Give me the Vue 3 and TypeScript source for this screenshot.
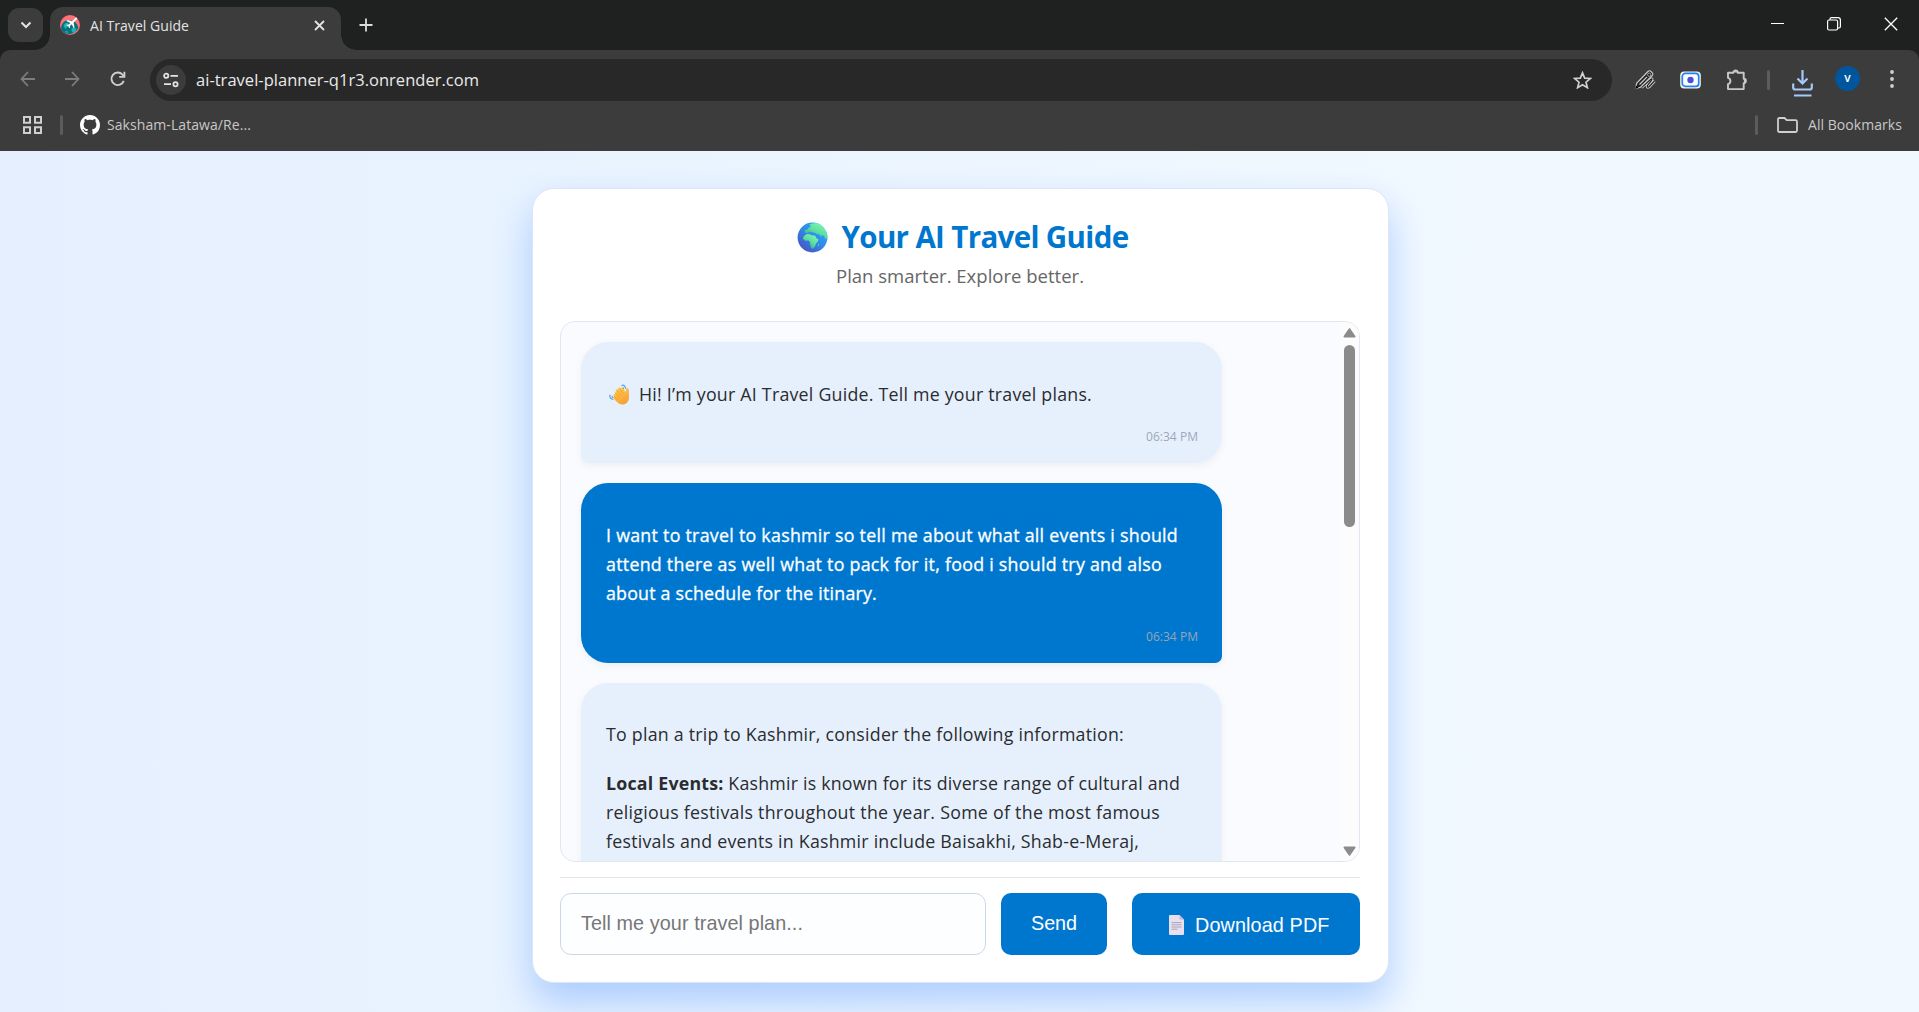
<script setup lang="ts">
import type { Directive } from 'vue'

interface Line {
  text: string
  width: number
  strong?: string
}

interface Message {
  from: 'bot' | 'user'
  time?: string
  wave?: boolean
  paragraphs: Line[][]
}

// Tracks a text run so that it spans the given number of pixels.
const vFit: Directive<HTMLElement, number> = {
  mounted(el, binding) {
    const natural = el.getBoundingClientRect().width
    const count = (el.textContent ?? '').length
    el.style.letterSpacing = `${(binding.value - natural) / count}px`
  },
}

const messages: Message[] = [
  {
    from: 'bot',
    time: '06:34 PM',
    wave: true,
    paragraphs: [[{ text: 'Hi! I’m your AI Travel Guide. Tell me your travel plans.', width: 453 }]],
  },
  {
    from: 'user',
    time: '06:34 PM',
    paragraphs: [
      [
        { text: 'I want to travel to kashmir so tell me about what all events i should', width: 572 },
        { text: 'attend there as well what to pack for it, food i should try and also', width: 556 },
        { text: 'about a schedule for the itinary.', width: 271 },
      ],
    ],
  },
  {
    from: 'bot',
    paragraphs: [
      [{ text: 'To plan a trip to Kashmir, consider the following information:', width: 518 }],
      [
        { strong: 'Local Events:', text: ' Kashmir is known for its diverse range of cultural and', width: 574 },
        { text: 'religious festivals throughout the year. Some of the most famous', width: 554 },
        { text: 'festivals and events in Kashmir include Baisakhi, Shab-e-Meraj,', width: 533 },
      ],
    ],
  },
]
</script>

<template>
  <div class="window">
    <header class="browser">
      <div class="tabstrip">
        <div class="tab-search">
          <svg width="12" height="8" viewBox="0 0 12 8"><path d="M1.5 1.5 6 6l4.500-4.500" fill="none" stroke="#e3e3e3" stroke-width="2" /></svg>
        </div>
        <div class="tab">
          <svg class="favicon" width="20" height="20" viewBox="0 0 20 20">
            <circle cx="10" cy="10" r="10" fill="#fb7277" />
            <path d="M1.200 15C.5 9 4 5.200 9 5.200c5 0 8.500 3 9.300 7.800A10 10 0 0 1 1.200 15Z" fill="#0b6e7f" />
            <path d="M3.500 10.500c1-2 2.500-3 4-3l1 1.500 1.500 1-1.500 1.500-1.500.5-1 2-1.500-1.500Zm8 3 2.500-1.500 2.500 2-1 3-2.500 1-1.500-2.500Zm-6.500 3 2-1 1.500 2.500H7Z" fill="#18b8b0" />
            <path d="m15.300 3-3.300 3.200L7.500 5l-1 .9 3.800 2-1.800 1.800-1.500-.2-.7.700 2 1 1 2 .7-.7-.1-1.500 1.900-1.800 1.800 3.700.9-1-.9-4.500 3.300-3.200c.8-1-.6-2.200-1.600-1.200Z" fill="#fff" />
          </svg>
          <span class="tab-title" v-fit="99">AI Travel Guide</span>
          <svg class="tab-close" width="11" height="11" viewBox="0 0 11 11"><path d="m1 1 9 9m0-9-9 9" stroke="#e3e3e3" stroke-width="1.800" /></svg>
        </div>
        <svg class="new-tab" width="14" height="14" viewBox="0 0 14 14"><path d="M7 .5v13M.5 7h13" stroke="#dcdcdc" stroke-width="1.800" /></svg>
        <div class="window-controls">
          <svg width="13" height="14" viewBox="0 0 13 14"><path d="M0 6.500h13" stroke="#fff" stroke-width="1" /></svg>
          <svg width="14" height="14" viewBox="0 0 14 14" fill="none" stroke="#fff" stroke-width="1.200"><rect x=".6" y="3" width="10" height="10" rx="1.500" /><path d="M3 3V2Q3 .6 4.500.6H11q2.400 0 2.400 2.400v6.500q0 1.500-1.500 1.500h-1" /></svg>
          <svg width="14" height="14" viewBox="0 0 14 14"><path d="m.8.8 12.400 12.400m0-12.400L.8 13.200" stroke="#fff" stroke-width="1.300" /></svg>
        </div>
      </div>

      <div class="toolbar">
        <svg class="nav back" width="16" height="16" viewBox="0 0 16 16"><path d="M8 1 1.500 8 8 15M1.500 8H15" fill="none" stroke="#7d7d7d" stroke-width="1.800" /></svg>
        <svg class="nav forward" width="16" height="16" viewBox="0 0 16 16"><path d="m8 1 6.500 7L8 15m6.500-7H1" fill="none" stroke="#7d7d7d" stroke-width="1.800" /></svg>
        <svg class="nav reload" width="16" height="16" viewBox="0 0 17 17" fill="none" stroke="#cfcfcf" stroke-width="2"><path d="M14.600 10.500a6.700 6.700 0 1 1-1.300-6.700l1.700 1.900" /><path d="M15.300.8v5.400H9.800" /></svg>
        <div class="omnibox">
          <div class="site-info">
            <svg width="16" height="16" viewBox="0 0 16 16" fill="none" stroke="#e3e3e3" stroke-width="1.800"><circle cx="3.200" cy="3.800" r="2.100" /><path d="M7.500 3.800H15M1 12.200h7" /><circle cx="12.500" cy="12.200" r="2.100" /></svg>
          </div>
          <span class="url" v-fit="283">ai-travel-planner-q1r3.onrender.com</span>
          <svg class="star" width="19" height="18" viewBox="0 0 19 18"><path d="m9.500 1.800 2.200 5.300 5.700.4-4.400 3.700 1.400 5.500-4.900-3-4.900 3L6 11.200 1.600 7.500l5.700-.4z" fill="none" stroke="#cfcfcf" stroke-width="1.700" /></svg>
        </div>
        <svg class="ext-pen" width="22" height="22" viewBox="0 0 22 22">
          <path d="m7.500 18.500 9-8q2.400-1.500 1 .8l-4 5.200q-.8 2.500 1.600 1.200l5.400-5.700" fill="none" stroke="#d0d0d0" stroke-width="3" />
          <path d="m7.500 18.500 9-8q2.400-1.500 1 .8l-4 5.200q-.8 2.500 1.600 1.200l5.400-5.700" fill="none" stroke="#222" stroke-width="1.200" />
          <path d="m1.500 19.500 1.300-5.500L14 2.500q1.500-1.500 3 0l1.300 1.300q1.300 1.300 0 2.700L6.500 18.200Z" fill="#222" stroke="#d0d0d0" stroke-width="1.100" />
          <path d="m5.500 15.500 7.500-7.700" stroke="#cfcfcf" stroke-width="1.200" />
          <path d="m1 20 1-3.500 2.500 2.200Z" fill="#000" /><circle cx="15.200" cy="5.700" r="1.600" fill="#111" stroke="#ccc" stroke-width=".8" />
        </svg>
        <svg class="ext-cam" width="21" height="18" viewBox="0 0 21 18"><rect x=".2" y=".4" width="20.600" height="17" rx="4" fill="#fff3e4" /><rect x="2.300" y="2.400" width="16.400" height="13" rx="3" fill="#fff" stroke="#1a84ff" stroke-width="1.700" /><circle cx="10.500" cy="9" r="3.200" fill="#4950d4" /></svg>
        <svg class="ext-puzzle" width="22" height="22" viewBox="0 0 22 22"><path d="M2 3.700h5.300a2.200 2.200 0 0 1 4.400 0h6v6a2.200 2.200 0 0 1 0 4.400v6H2v-5a3.200 3.200 0 0 0 0-6.200Z" fill="none" stroke="#c8c8c8" stroke-width="1.900" stroke-linejoin="round" /><path d="M7.500 3.500a2.100 2.100 0 0 1 4 0zm10.400 6.400a2.100 2.100 0 0 1 0 4z" fill="#c8c8c8" /></svg>
        <i class="bar"></i>
        <svg class="download" width="21" height="27" viewBox="0 0 21 27" fill="none" stroke="#a8c7fa" stroke-width="2.200"><path d="M10.500 0v13M5.500 8.500l5 5 5-5M1.200 13.500v4q0 2 2 2h14.600q2 0 2-2v-4M2 25.500h17.500" /></svg>
        <span class="avatar">v</span>
        <svg class="menu" width="4" height="18" viewBox="0 0 4 18" fill="#cfcfcf"><circle cx="2" cy="2" r="1.900" /><circle cx="2" cy="9" r="1.900" /><circle cx="2" cy="16" r="1.900" /></svg>
      </div>

      <div class="bookmarks">
        <svg width="19" height="18" viewBox="0 0 19 18" fill="none" stroke="#cfcfcf" stroke-width="2"><path d="M1 1h6v5.700H1zM12 1h6v5.700h-6zM1 11.300h6V17H1zM12 11.300h6V17h-6z" /></svg>
        <i class="bar left"></i>
        <svg class="github" width="20" height="20" viewBox="0 0 16 16" fill="#fff"><path d="M8 0C3.580 0 0 3.580 0 8c0 3.540 2.290 6.530 5.470 7.590.4.070.55-.17.55-.38 0-.19-.01-.82-.01-1.490-2.010.37-2.530-.49-2.690-.94-.09-.23-.48-.94-.82-1.130-.28-.15-.68-.52-.01-.53.63-.01 1.080.58 1.230.82.72 1.210 1.870.87 2.330.66.070-.52.28-.87.51-1.070-1.780-.2-3.640-.89-3.640-3.950 0-.87.31-1.590.82-2.150-.08-.2-.36-1.020.08-2.120 0 0 .67-.21 2.200.82.64-.18 1.320-.27 2-.27s1.360.09 2 .27c1.530-1.040 2.200-.82 2.200-.82.44 1.100.16 1.920.08 2.120.51.56.82 1.270.82 2.150 0 3.070-1.870 3.750-3.650 3.950.29.25.54.73.54 1.480 0 1.070-.01 1.930-.01 2.200 0 .21.15.46.55.38A8.010 8.010 0 0 0 16 8c0-4.420-3.580-8-8-8Z" /></svg>
        <span class="bookmark" v-fit="144">Saksham-Latawa/Re...</span>
        <i class="bar right"></i>
        <svg class="folder" width="21" height="16" viewBox="0 0 21 16"><path d="M1 2.500Q1 1 2.500 1h5l2.200 2.200h8.800q1.500 0 1.500 1.500v8.800q0 1.500-1.500 1.500h-16Q1 15 1 13.500Z" fill="none" stroke="#cfcfcf" stroke-width="1.800" /></svg>
        <span class="bookmark" v-fit="94">All Bookmarks</span>
      </div>
    </header>

    <main class="page">
      <section class="card">
        <h1 class="title">
          <svg width="31" height="31" viewBox="0 0 31 31">
            <defs>
              <linearGradient id="sea" x1=".9" y1=".1" x2=".2" y2=".9"><stop offset="0" stop-color="#27b0f8" /><stop offset=".5" stop-color="#2f8bea" /><stop offset="1" stop-color="#4558c8" /></linearGradient>
              <linearGradient id="land" x1=".9" y1="0" x2=".2" y2="1"><stop offset="0" stop-color="#7dffb8" /><stop offset=".5" stop-color="#5fdfa0" /><stop offset="1" stop-color="#3c9c85" /></linearGradient>
              <clipPath id="disc"><circle cx="15.500" cy="15.500" r="14.900" /></clipPath>
            </defs>
            <circle cx="15.500" cy="15.500" r="14.900" fill="url(#sea)" />
            <g clip-path="url(#disc)" fill="url(#land)">
              <path d="M12.500 2.500 15 1.500 20 1l6 3 5 6v8l-1.500-1.500L28 17l-.8-3-2.200-1-1 2-1.500-2.500-3-.5-1.500-1.300-1.500.3-1-1.200-1.500.8-1.300-1-1.700 1.400-1.800-.3-1.700-.2.500-2.500 2.500-.5 1.500-2 2-1Z" />
              <path d="M7.500 13.500 10 12l3 .3 1.500 1 3.500.2 1.700 3 1.800.8-.5 2-2 2.200-1 3-2 2.300-1.800-.5-1-3.500-.2-2.800-1.500-1.500-3 .2L6 17l.3-2Z" />
              <path d="m20.700 23 1.200-1.500-.3 2.800-.9.300Z" />
            </g>
          </svg>
          <span v-fit="287">Your AI Travel Guide</span>
        </h1>
        <p class="subtitle"><span v-fit="248">Plan smarter. Explore better.</span></p>

        <div class="chat">
          <div class="messages">
            <article v-for="(message, m) in messages" :key="m" class="bubble" :class="message.from">
              <p v-for="(paragraph, p) in message.paragraphs" :key="p">
                <span v-for="line in paragraph" :key="line.text" class="line">
                  <svg v-if="message.wave" class="wave" width="20" height="21" viewBox="0 0 20 21">
                    <defs><linearGradient id="hand" x1="0" y1="0" x2=".5" y2="1"><stop offset="0" stop-color="#ffd04a" /><stop offset="1" stop-color="#f7a13a" /></linearGradient></defs>
                    <path d="M6.200 9.800q-.8-1.500.5-2.100L6.900 6.200q.5-1.500 1.900-.8l.5-1.500q1.200-1 2.200 0l1.300-.3q1 .1 1.500 1l2.300 4 .5-3.300q.3-1.200 1.500-1 1.200.3 1.200 1.700l.2 7.500q-.3 5.200-4.500 6.700-4 1.200-7.500-2.200l-3.300-3.300q-1-1.300.3-2.200L4.500 11.500q0-1.700 1.700-1.700Z" fill="url(#hand)" />
                    <path d="m8.500 6.500 3.200 5M11 4.800l3 5M6.800 9.200l3.500 4.300M5.500 12.500l3 3" stroke="#e8982c" stroke-width=".7" fill="none" />
                    <path d="M12.500 1.700q1.500-1.300 2.900.1t1.300 3M14 3.500l1 1.300M1.200 10.800q-.9 1.900.3 3.200t2.700 1.300M3 11.800q0 1.500 1.200 2" fill="none" stroke="#5aa5d8" stroke-width="1.200" />
                  </svg>
                  <span v-fit="line.width"><strong v-if="line.strong">{{ line.strong }}</strong>{{ line.text }}</span>
                </span>
              </p>
              <time v-if="message.time"><span v-fit="52">{{ message.time }}</span></time>
            </article>
          </div>
          <div class="scrollbar">
            <svg width="13" height="10" viewBox="0 0 13 10"><path d="M6.500 1.200 11.500 8.500h-10Z" fill="#8b8b8b" stroke="#8b8b8b" stroke-width="2" stroke-linejoin="round" /></svg>
            <i class="thumb"></i>
            <svg class="down" width="13" height="10" viewBox="0 0 13 10"><path d="M6.500 8.800 11.500 1.500h-10Z" fill="#8b8b8b" stroke="#8b8b8b" stroke-width="2" stroke-linejoin="round" /></svg>
          </div>
        </div>

        <form class="composer" @submit.prevent>
          <div class="field"><span v-fit="222">Tell me your travel plan...</span></div>
          <button class="send" type="submit"><span v-fit="46">Send</span></button>
          <button class="pdf" type="button">
            <svg width="15" height="20" viewBox="0 0 15 20"><path d="M0 1q0-1 1-1h9.500L15 4.500V19q0 1-1 1H1q-1 0-1-1Z" fill="#e8e0f0" /><path d="M10.500 0 15 4.500h-3.500q-1 0-1-1Z" fill="#c3b5ce" /><path d="M2.500 7.600h10M2.500 9.800h10M2.500 12h10M2.500 14.200h6" stroke="#a59bb2" stroke-width=".9" /></svg>
            <span v-fit="134.500">Download PDF</span>
          </button>
        </form>
      </section>
    </main>
  </div>
</template>

<style>
body {
  margin: 0;
  overflow: hidden;
}
</style>

<style scoped>
* {
  box-sizing: border-box;
}
svg,
i {
  display: block;
  flex: none;
}
.window {
  display: flex;
  flex-direction: column;
  width: 1919px;
  height: 1012px;
  overflow: hidden;
  font-family: 'Open Sans', 'Noto Sans', sans-serif;
  white-space: nowrap;
}

/* Browser frame */
.browser {
  flex: none;
  height: 151px;
  background: #1f2120;
}
.tabstrip {
  display: flex;
  align-items: flex-start;
  height: 50px;
}
.tab-search {
  display: grid;
  place-items: center;
  width: 35px;
  height: 34px;
  margin: 8px 7px 0 8px;
  border-radius: 11px;
  background: #3c3c3c;
}
.tab {
  position: relative;
  display: flex;
  align-items: center;
  width: 291px;
  height: 43px;
  margin-top: 7px;
  padding: 0 16px 7px 10px;
  border-radius: 13px 13px 0 0;
  background: #3c3c3c;
}
.tab::before,
.tab::after {
  content: '';
  position: absolute;
  bottom: 0;
  left: -15px;
  width: 15px;
  height: 15px;
  background: radial-gradient(circle at 0 0, transparent 14.5px, #3c3c3c 15px);
}
.tab::after {
  left: auto;
  right: -15px;
  background: radial-gradient(circle at 100% 0, transparent 14.5px, #3c3c3c 15px);
}
.tab-title {
  margin: 1px 0 0 10px;
  color: #e3e3e3;
  font-size: 14px;
  line-height: 20px;
}
.tab-close {
  margin-left: auto;
}
.new-tab {
  margin: 18px 0 0 18px;
}
.window-controls {
  display: flex;
  gap: 43px;
  margin: 17px 21px 0 auto;
}
.toolbar {
  display: flex;
  align-items: center;
  height: 59px;
  padding: 0 25px 0 20px;
  border-radius: 10px 10px 0 0;
  background: #3c3c3c;
}
.nav {
  margin-top: -1px;
}
.nav.forward {
  margin-left: 28px;
}
.nav.reload {
  margin: -2px 0 0 30px;
}
.omnibox {
  display: flex;
  align-items: center;
  width: 1462px;
  height: 42px;
  margin-left: 24px;
  padding: 0 20px 0 6px;
  border-radius: 21px;
  background: #282828;
}
.site-info {
  display: grid;
  place-items: center;
  width: 30px;
  height: 30px;
  border-radius: 50%;
  background: #3c3c3c;
}
.url {
  margin-left: 10px;
  color: #eaeaea;
  font-size: 16.5px;
  line-height: 24px;
}
.star {
  margin-left: auto;
}
.ext-pen {
  margin-left: 22px;
}
.ext-cam {
  margin-left: 24px;
}
.ext-puzzle {
  margin-left: 25px;
}
.bar {
  width: 3px;
  height: 20px;
  border-radius: 2px;
  background: #5c5c5c;
}
.toolbar .bar {
  margin-left: 19px;
}
.download {
  margin: 7px 0 0 22px;
}
.avatar {
  width: 25px;
  height: 25px;
  margin: -2px 0 0 22px;
  border-radius: 50%;
  background: #00569c;
  color: #fff;
  font-size: 12px;
  font-weight: 600;
  line-height: 23px;
  text-align: center;
}
.menu {
  margin: -2px 0 0 auto;
}
.bookmarks {
  display: flex;
  align-items: center;
  height: 42px;
  padding: 0 17px 10px 23px;
  background: #3c3c3c;
}
.bar.left {
  margin: 0 17px 0 18px;
}
.bar.right {
  margin: 0 19px 0 auto;
}
.github {
  margin-right: 7px;
}
.folder {
  margin-right: 10px;
}
.bookmark {
  color: #c8c8c8;
  font-size: 14px;
  line-height: 20px;
}

/* Page */
.page {
  flex: 1;
  min-height: 0;
  padding: 37px 0 0 532px;
  background: linear-gradient(to right, #e6efff, #e8f3ff 25%, #f0f8ff 70%, #f2f8ff);
}
.card {
  width: 857px;
  height: 795px;
  padding: 28px 28px 27px 27px;
  border: 1px solid #dce6f8;
  border-radius: 22px;
  background: #fff;
  box-shadow: 0 19px 38px rgba(0, 96, 255, 0.27);
}
.title {
  display: flex;
  align-items: center;
  justify-content: center;
  gap: 14px;
  height: 40px;
  margin: 0;
  padding-left: 5px;
  color: #0077cf;
  font-size: 29.5px;
  font-weight: 700;
  line-height: 40px;
}
.subtitle {
  margin: 5px 0 31px;
  color: #666;
  font-size: 18.5px;
  line-height: 28px;
  text-align: center;
}
.chat {
  display: flex;
  height: 541px;
  border: 1px solid #dfe8f2;
  border-radius: 15px;
  background: #fafbff;
  overflow: hidden;
}
.messages {
  display: flex;
  flex: 1;
  flex-direction: column;
  gap: 20.3px;
  min-width: 0;
  padding: 20px 20px 0;
}
.bubble {
  flex: none;
  width: 641px;
  padding: 18px 25px;
  border-radius: 27px 27px 27px 7px;
  background: #e6f0fd;
  box-shadow: 0 3px 8px rgba(0, 0, 0, 0.05);
  color: #2a2c2f;
}
.bubble.user {
  border-radius: 27px 27px 7px 27px;
  background: #0077cf;
  color: #fff;
}
.bubble.user p {
  -webkit-text-stroke: 0.3px #fff;
}
.bubble:last-child {
  flex: 1;
  padding-bottom: 0;
  border-radius: 27px 27px 0 0;
}
.bubble p {
  margin: 19.5px 0;
  font-size: 17.8px;
  line-height: 29.1px;
}
.bubble:last-child p:last-child {
  margin-bottom: 0;
}
.line {
  display: flex;
  align-items: center;
}
.wave {
  margin: 0 10px 0 3px;
}
time {
  display: block;
  margin-right: -1px;
  font-size: 12px;
  line-height: 17px;
  text-align: right;
  color: #9ca8b8;
}
.user time {
  color: #99a4b3;
}
.subtitle span,
time span {
  display: inline-block;
}
.scrollbar {
  display: flex;
  flex-direction: column;
  align-items: center;
  width: 19px;
  padding: 6px 0 5px;
  background: #fcfcfc;
}
.thumb {
  width: 11px;
  height: 182px;
  margin-top: 7px;
  border-radius: 6px;
  background: #8b8b8b;
}
.scrollbar .down {
  margin-top: auto;
}
.composer {
  display: flex;
  margin-top: 15px;
  padding-top: 15px;
  border-top: 1px solid #dfe6ee;
  font-family: 'Liberation Sans', Arial, sans-serif;
  font-size: 19.8px;
}
.field {
  display: flex;
  align-items: center;
  width: 426px;
  height: 62px;
  padding: 0 0 1px 20px;
  border: 1px solid #cdd8e6;
  border-radius: 11px;
  background: #fdfeff;
  color: #767676;
}
button {
  display: flex;
  align-items: center;
  height: 62px;
  padding: 0;
  border: 0;
  border-radius: 10px;
  background: #0077cf;
  color: #fff;
  font: inherit;
}
.send {
  justify-content: center;
  width: 106px;
  margin-left: 15px;
  padding-bottom: 1px;
}
.pdf {
  gap: 11px;
  width: 228px;
  margin-left: 25px;
  padding: 2px 0 0 37px;
}
</style>
